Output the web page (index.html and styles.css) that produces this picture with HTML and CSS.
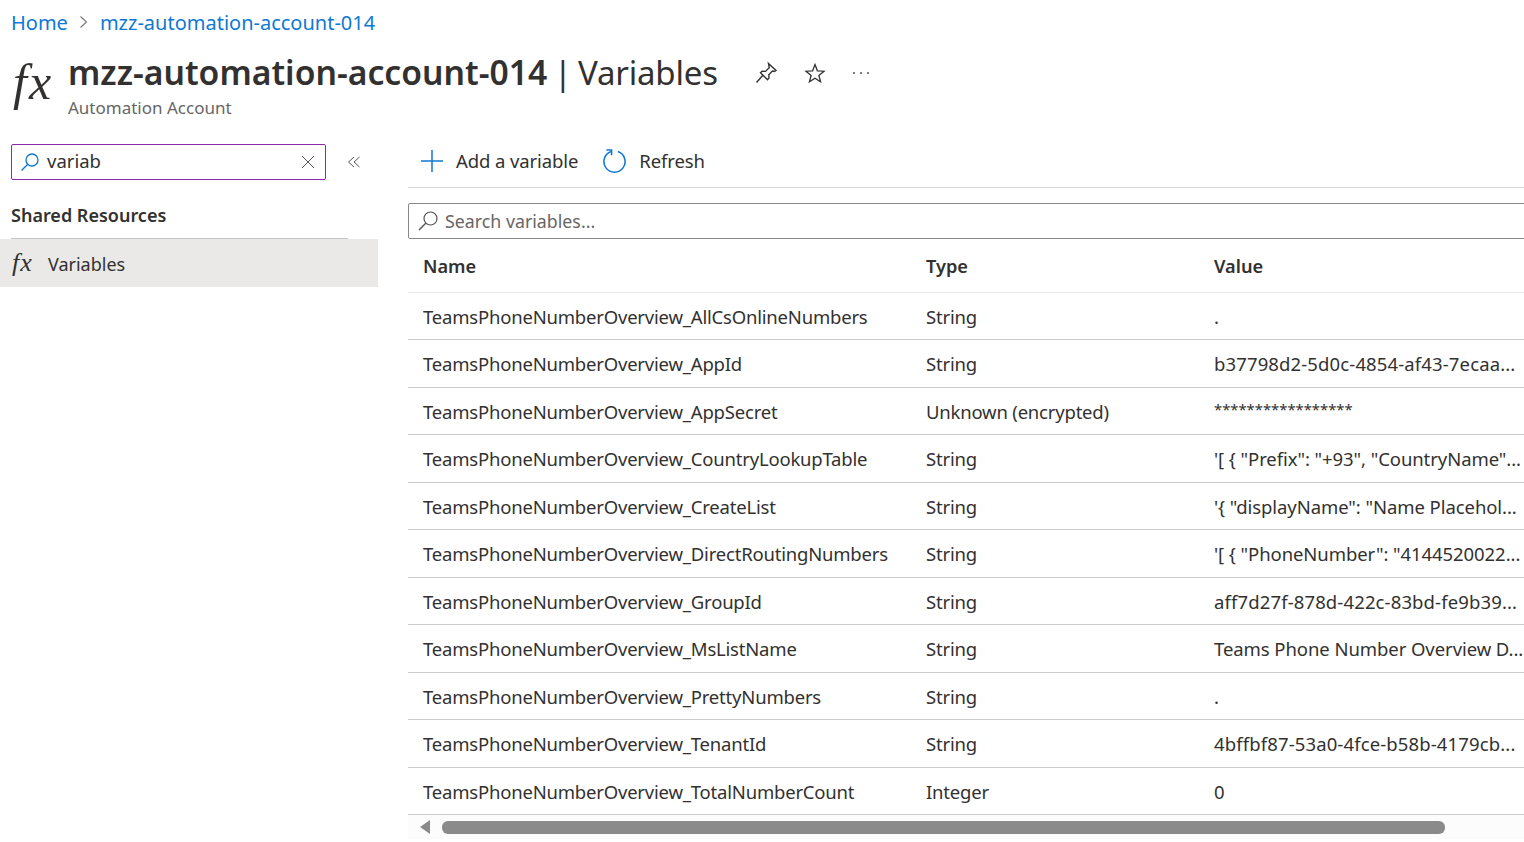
FILE: index.html
```html
<!DOCTYPE html>
<html lang="en">
<head>
  <meta charset="UTF-8">
  <title>mzz-automation-account-014 | Variables</title>
  <link rel="stylesheet" href="styles.css">
</head>
<body>
  <nav class="breadcrumb">
    <a href="#">Home</a>
    <svg class="crumb-sep" width="10" height="16" viewBox="0 0 10 16"><path d="M1.5 2.5 7.5 8l-6 5.5" fill="none" stroke="#777" stroke-width="1.1"/></svg>
    <a href="#">mzz-automation-account-014</a>
  </nav>

  <header class="page-head">
    <span class="fx fx-large">fx</span>
    <div class="titles">
      <div class="title-row">
        <h1><b>mzz-automation-account-014</b> | Variables</h1>
        <div class="head-actions">
          <svg width="24" height="24" viewBox="0 0 24 24"><path d="M14.5 2.5 22 9.5l-1.6 1-2-.4-3.6 3.6.2 3.4-1.5 1.6-7-7 1.6-1.5 3.4.2 3.7-3.6-.3-2.1zM8.7 14.5 2.5 21.5" fill="none" stroke="#333" stroke-width="1.4"/></svg>
          <svg width="24" height="24" viewBox="0 0 24 24"><path d="M12 3.5l2.4 6.3 6.6.4-5.1 4.2 1.7 6.5-5.6-3.6-5.6 3.6 1.7-6.5L3 10.2l6.6-.4z" fill="none" stroke="#333" stroke-width="1.3"/></svg>
          <svg width="18" height="24" viewBox="0 0 18 24"><g fill="#555"><circle cx="2" cy="12" r="1"/><circle cx="9" cy="12" r="1"/><circle cx="16" cy="12" r="1"/></g></svg>
        </div>
      </div>
      <div class="subtitle">Automation Account</div>
    </div>
  </header>

  <div class="layout">
    <aside class="sidebar">
      <div class="side-search-row">
        <div class="side-search">
          <svg width="20" height="20" viewBox="0 0 20 20"><circle cx="12" cy="8" r="6" fill="none" stroke="#0f78d4" stroke-width="1.3"/><path d="M7.8 12.2 1.5 18.5" stroke="#0f78d4" stroke-width="1.4"/></svg>
          <span class="side-search-text">variab</span>
          <svg width="14" height="14" viewBox="0 0 14 14"><path d="M1 1l12 12M13 1 1 13" stroke="#555" stroke-width="1"/></svg>
        </div>
        <svg class="collapse" width="14" height="14" viewBox="0 0 14 14"><path d="M7 2 1.5 7 7 12M12.5 2 7 7l5.5 5" fill="none" stroke="#555" stroke-width="1"/></svg>
      </div>
      <div class="side-group">Shared Resources</div>
      <div class="side-item">
        <span class="fx fx-small">fx</span>
        <span class="side-label">Variables</span>
      </div>
    </aside>

    <main class="content">
      <div class="toolbar">
        <button class="tool">
          <svg width="24" height="24" viewBox="0 0 24 24"><path d="M12 1v22M1 12h22" stroke="#0f78d4" stroke-width="1.5"/></svg>
          Add a variable
        </button>
        <button class="tool">
          <svg width="25" height="26" viewBox="0 0 26 26"><path d="M9.5 3.2a11 11 0 1 0 7 0" fill="none" stroke="#0f78d4" stroke-width="1.6"/><path d="M4.5 1.5h5.5v5.5" fill="none" stroke="#0f78d4" stroke-width="1.6"/></svg>
          Refresh
        </button>
      </div>

      <div class="filter">
        <svg width="22" height="22" viewBox="0 0 22 22"><circle cx="13.5" cy="8.5" r="6.5" fill="none" stroke="#555" stroke-width="1.2"/><path d="M9 13 2 20" stroke="#555" stroke-width="1.4"/></svg>
        <span>Search variables...</span>
      </div>

      <div class="grid-head">
        <div>Name</div><div>Type</div><div>Value</div>
      </div>
      <div class="row"><div>TeamsPhoneNumberOverview_AllCsOnlineNumbers</div><div>String</div><div>.</div></div>
      <div class="row"><div>TeamsPhoneNumberOverview_AppId</div><div>String</div><div class="guid">b37798d2-5d0c-4854-af43-7ecaa...</div></div>
      <div class="row"><div>TeamsPhoneNumberOverview_AppSecret</div><div>Unknown (encrypted)</div><div class="secret">*****************</div></div>
      <div class="row"><div>TeamsPhoneNumberOverview_CountryLookupTable</div><div>String</div><div class="json">'[ { "Prefix": "+93", "CountryName"...</div></div>
      <div class="row"><div>TeamsPhoneNumberOverview_CreateList</div><div>String</div><div class="json">'{ "displayName": "Name Placehol...</div></div>
      <div class="row"><div>TeamsPhoneNumberOverview_DirectRoutingNumbers</div><div>String</div><div class="json">'[ { "PhoneNumber": "4144520022...</div></div>
      <div class="row"><div>TeamsPhoneNumberOverview_GroupId</div><div>String</div><div class="guid">aff7d27f-878d-422c-83bd-fe9b39...</div></div>
      <div class="row"><div>TeamsPhoneNumberOverview_MsListName</div><div>String</div><div class="json">Teams Phone Number Overview D...</div></div>
      <div class="row"><div>TeamsPhoneNumberOverview_PrettyNumbers</div><div>String</div><div>.</div></div>
      <div class="row"><div>TeamsPhoneNumberOverview_TenantId</div><div>String</div><div class="guid">4bffbf87-53a0-4fce-b58b-4179cb...</div></div>
      <div class="row"><div>TeamsPhoneNumberOverview_TotalNumberCount</div><div>Integer</div><div>0</div></div>

      <div class="scrollbar">
        <svg width="12" height="14" viewBox="0 0 12 14"><path d="M11 0v14L1 7z" fill="#8a8a8a"/></svg>
        <div class="thumb"></div>
      </div>
    </main>
  </div>
</body>
</html>
```

FILE: styles.css
```css
* {
  box-sizing: border-box;
}

html, body {
  height: 100%;
}

body {
  margin: 0;
  overflow: hidden;
  background-color: #fff;
  color: #323130;
  font-family: "Noto Sans", "Open Sans", sans-serif;
  font-size: 18.5px;
}

a {
  color: #0f78d4;
  text-decoration: none;
}

.breadcrumb {
  display: flex;
  align-items: center;
  gap: 11px;
  height: 46px;
  padding-left: 11px;
  padding-bottom: 2px;
  font-size: 20px;
}

.page-head {
  display: flex;
  height: 98px;
}

.fx {
  font-family: "Liberation Serif", serif;
  font-style: italic;
  color: #323130;
}

.fx-large {
  width: 68px;
  padding: 6px 0 0 13px;
  font-size: 50px;
  line-height: 60px;
  letter-spacing: 2px;
}

.fx-small {
  width: 36px;
  font-size: 26px;
  letter-spacing: 1px;
}

.title-row {
  display: flex;
  align-items: center;
  height: 52px;
}

h1 {
  margin: 0;
  font-size: 33px;
  font-weight: 400;
  letter-spacing: -0.2px;
  word-spacing: -2px;
  color: #323130;
}

h1 b {
  font-size: 33.7px;
  letter-spacing: 0;
  font-weight: 600;
}

.head-actions {
  display: flex;
  align-items: center;
  gap: 25px;
  margin-left: 36px;
  padding-top: 2px;
}

.subtitle {
  margin-top: -2px;
  font-size: 17px;
  color: #666;
}

.layout {
  display: flex;
}

.sidebar {
  width: 378px;
  margin-right: 30px;
}

.side-search-row {
  display: flex;
  align-items: center;
  gap: 21px;
  padding-left: 11px;
}

.side-search {
  display: flex;
  align-items: center;
  width: 315px;
  height: 36px;
  padding: 0 10px 0 8px;
  border: 1px solid #8c2aa8;
  border-radius: 2px;
}

.side-search-text {
  flex: 1;
  margin-left: 7px;
  padding-bottom: 4px;
}

.side-group {
  margin: 0 30px 0 11px;
  padding-top: 23px;
  height: 59px;
  border-bottom: 1px solid #c8c6c4;
  font-size: 18px;
  font-weight: 600;
}

.side-item {
  display: flex;
  align-items: center;
  height: 48px;
  padding-left: 12px;
  background-color: #ebe9e8;
  font-size: 18px;
}

.side-label {
  padding-top: 2px;
}

.content {
  flex: 1;
  min-width: 0;
}

.toolbar {
  display: flex;
  align-items: center;
  gap: 24px;
  height: 44px;
  padding-left: 12px;
  padding-bottom: 10px;
  border-bottom: 1px solid #d6d6d6;
}

.tool {
  display: flex;
  align-items: center;
  gap: 12px;
  padding: 0;
  border: none;
  background: none;
  color: #323130;
  font: inherit;
  letter-spacing: -0.1px;
}

.filter {
  display: flex;
  align-items: center;
  gap: 6px;
  height: 36px;
  margin-top: 15px;
  margin-right: -4px;
  padding-left: 8px;
  border: 1px solid #8a8886;
  border-radius: 2px;
  color: #666;
  font-size: 17.8px;
}

.grid-head, .row {
  display: grid;
  grid-template-columns: 503px 288px 1fr;
  align-items: center;
  padding-left: 15px;
  white-space: nowrap;
}

.grid-head {
  height: 53.5px;
  padding-top: 1px;
  border-bottom: 1px solid #e8e8e8;
  font-size: 18.2px;
  font-weight: 600;
}

.row {
  height: 47.5px;
  padding-top: 1px;
  border-bottom: 1px solid #ccc;
  letter-spacing: -0.2px;
}

.row > div:nth-child(3) {
  letter-spacing: 0;
}

.row > .guid:nth-child(3) {
  letter-spacing: 0.13px;
}

.row > .json:nth-child(3) {
  letter-spacing: -0.07px;
}

.row > .secret {
  margin-top: -4px;
  font-size: 14.8px;
}

.scrollbar {
  display: flex;
  align-items: center;
  gap: 11px;
  height: 24px;
  padding-left: 11px;
  background-color: #fcfcfc;
}

.thumb {
  width: 1003px;
  height: 13px;
  border-radius: 6px;
  background-color: #8a8a8a;
}
```
